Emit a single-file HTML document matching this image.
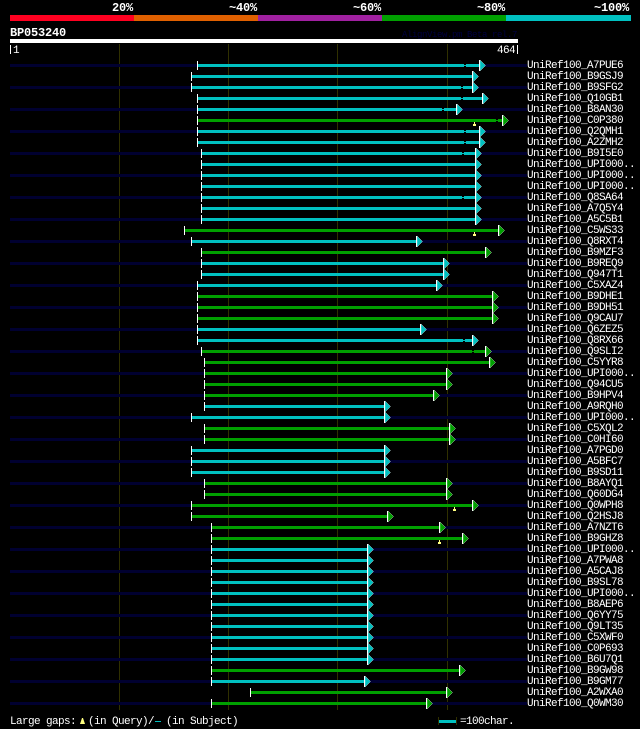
<!DOCTYPE html>
<html><head><meta charset="utf-8"><style>
html,body{margin:0;padding:0;background:#000;width:640px;height:729px;overflow:hidden}
svg{display:block}
text{font-family:"Liberation Mono",monospace;font-size:11px;letter-spacing:-.6px;fill:#fff}
.b{font-weight:bold;font-size:12px;letter-spacing:-.2px}
.n{fill:#000030}.c{fill:#00c0c0}.g{fill:#00a000}
.w{fill:none;stroke:#fff;stroke-width:1px;shape-rendering:crispEdges}
</style></head><body>
<svg width="640" height="729" viewBox="0 0 640 729" xmlns="http://www.w3.org/2000/svg">
<defs>
<g id="ac"><polygon points="1,-5 6.5,.5 1,6" fill="#00c0c0" stroke="#fff" stroke-width=".35"/><rect x="0" y="-5" width="1" height="11" fill="#fff"/></g>
<g id="ag"><polygon points="1,-5 6.5,.5 1,6" fill="#00a000" stroke="#fff" stroke-width=".35"/><rect x="0" y="-5" width="1" height="11" fill="#fff"/></g>
<g id="x"><rect x="0" y="-1" width="2" height="1" fill="#000"/><rect x="0" y="1" width="2" height="1" fill="#000"/></g>
<g id="t" fill="#ffff80"><rect x="1" y="0" width="1" height="2"/><rect x="0" y="2" width="3" height="2"/></g>
<rect id="nv" class="n" x="10" y="-1" width="517" height="3"/>
</defs>
<rect width="640" height="729" fill="#000"/>
<rect x="10" y="15" width="124" height="6" fill="#ff0020"/>
<rect x="134" y="15" width="124" height="6" fill="#e06000"/>
<rect x="258" y="15" width="124" height="6" fill="#a020a0"/>
<rect x="382" y="15" width="124" height="6" fill="#00a000"/>
<rect x="506" y="15" width="125" height="6" fill="#00c0c0"/>
<text class="b" x="112" y="11">20%</text>
<text class="b" x="229" y="11">~40%</text>
<text class="b" x="353" y="11">~60%</text>
<text class="b" x="477" y="11">~80%</text>
<text class="b" x="594" y="11">~100%</text>
<text class="b" x="10" y="36">BP053240</text>
<text x="402" y="37" style="fill:#000040;font-size:9px;letter-spacing:-.4px">AlignView.pm Beta rel.7</text>
<rect x="10" y="39" width="508" height="4" fill="#fff"/>
<rect x="10" y="45" width="1" height="9" fill="#fff"/>
<text x="13" y="53">1</text>
<text x="497" y="53">464</text>
<rect x="517" y="45" width="1" height="9" fill="#fff"/>
<g fill="#303000"><rect x="119" y="44" width="1" height="666"/><rect x="228" y="44" width="1" height="666"/><rect x="337" y="44" width="1" height="666"/><rect x="447" y="44" width="1" height="666"/></g>

<g transform="translate(0,65)"><use href="#nv"/><rect class="c" x="197" y="-1" width="282" height="3"/><use href="#x" x="464"/><use href="#ac" x="479"/><path class="w" d="M197.5-4V5"/><text x="527" y="3">UniRef100_A7PUE6</text></g>
<g transform="translate(0,76)"><rect class="c" x="191" y="-1" width="281" height="3"/><use href="#ac" x="472"/><path class="w" d="M191.5-4V5"/><text x="527" y="3">UniRef100_B9GSJ9</text></g>
<g transform="translate(0,87)"><use href="#nv"/><rect class="c" x="191" y="-1" width="281" height="3"/><use href="#x" x="461"/><use href="#ac" x="472"/><path class="w" d="M191.5-4V5"/><text x="527" y="3">UniRef100_B9SFG2</text></g>
<g transform="translate(0,98)"><rect class="c" x="197" y="-1" width="285" height="3"/><use href="#x" x="461"/><use href="#ac" x="482"/><path class="w" d="M197.5-4V5"/><text x="527" y="3">UniRef100_Q10GB1</text></g>
<g transform="translate(0,109)"><use href="#nv"/><rect class="c" x="197" y="-1" width="259" height="3"/><use href="#x" x="442"/><use href="#ac" x="456"/><path class="w" d="M197.5-4V5"/><text x="527" y="3">UniRef100_B8AN30</text></g>
<g transform="translate(0,120)"><rect class="g" x="197" y="-1" width="305" height="3"/><use href="#x" x="496"/><use href="#ag" x="502"/><path class="w" d="M197.5-4V5"/><use href="#t" x="473" y="2"/><text x="527" y="3">UniRef100_C0P380</text></g>
<g transform="translate(0,131)"><use href="#nv"/><rect class="c" x="197" y="-1" width="282" height="3"/><use href="#x" x="464"/><use href="#ac" x="479"/><path class="w" d="M197.5-4V5"/><text x="527" y="3">UniRef100_Q2QMH1</text></g>
<g transform="translate(0,142)"><rect class="c" x="197" y="-1" width="282" height="3"/><use href="#x" x="464"/><use href="#ac" x="479"/><path class="w" d="M197.5-4V5"/><text x="527" y="3">UniRef100_A2ZMH2</text></g>
<g transform="translate(0,153)"><use href="#nv"/><rect class="c" x="201" y="-1" width="274" height="3"/><use href="#x" x="462"/><use href="#ac" x="475"/><path class="w" d="M201.5-4V5"/><text x="527" y="3">UniRef100_B9I5E0</text></g>
<g transform="translate(0,164)"><rect class="c" x="201" y="-1" width="274" height="3"/><use href="#ac" x="475"/><path class="w" d="M201.5-4V5"/><text x="527" y="3">UniRef100_UPI000..</text></g>
<g transform="translate(0,175)"><use href="#nv"/><rect class="c" x="201" y="-1" width="274" height="3"/><use href="#ac" x="475"/><path class="w" d="M201.5-4V5"/><text x="527" y="3">UniRef100_UPI000..</text></g>
<g transform="translate(0,186)"><rect class="c" x="201" y="-1" width="274" height="3"/><use href="#ac" x="475"/><path class="w" d="M201.5-4V5"/><text x="527" y="3">UniRef100_UPI000..</text></g>
<g transform="translate(0,197)"><use href="#nv"/><rect class="c" x="201" y="-1" width="274" height="3"/><use href="#x" x="462"/><use href="#ac" x="475"/><path class="w" d="M201.5-4V5"/><text x="527" y="3">UniRef100_Q8SA64</text></g>
<g transform="translate(0,208)"><rect class="c" x="201" y="-1" width="274" height="3"/><use href="#ac" x="475"/><path class="w" d="M201.5-4V5"/><text x="527" y="3">UniRef100_A7Q5Y4</text></g>
<g transform="translate(0,219)"><use href="#nv"/><rect class="c" x="201" y="-1" width="274" height="3"/><use href="#ac" x="475"/><path class="w" d="M201.5-4V5"/><text x="527" y="3">UniRef100_A5C5B1</text></g>
<g transform="translate(0,230)"><rect class="g" x="184" y="-1" width="314" height="3"/><use href="#ag" x="498"/><path class="w" d="M184.5-4V5"/><use href="#t" x="473" y="2"/><text x="527" y="3">UniRef100_C5WS33</text></g>
<g transform="translate(0,241)"><use href="#nv"/><rect class="c" x="191" y="-1" width="225" height="3"/><use href="#ac" x="416"/><path class="w" d="M191.5-4V5"/><text x="527" y="3">UniRef100_Q8RXT4</text></g>
<g transform="translate(0,252)"><rect class="g" x="201" y="-1" width="284" height="3"/><use href="#ag" x="485"/><path class="w" d="M201.5-4V5"/><text x="527" y="3">UniRef100_B9MZF3</text></g>
<g transform="translate(0,263)"><use href="#nv"/><rect class="c" x="201" y="-1" width="242" height="3"/><use href="#ac" x="443"/><path class="w" d="M201.5-4V5"/><text x="527" y="3">UniRef100_B9REQ9</text></g>
<g transform="translate(0,274)"><rect class="c" x="201" y="-1" width="242" height="3"/><use href="#ac" x="443"/><path class="w" d="M201.5-4V5"/><text x="527" y="3">UniRef100_Q947T1</text></g>
<g transform="translate(0,285)"><use href="#nv"/><rect class="c" x="197" y="-1" width="239" height="3"/><use href="#ac" x="436"/><path class="w" d="M197.5-4V5"/><text x="527" y="3">UniRef100_C5XAZ4</text></g>
<g transform="translate(0,296)"><rect class="g" x="197" y="-1" width="295" height="3"/><use href="#ag" x="492"/><path class="w" d="M197.5-4V5"/><text x="527" y="3">UniRef100_B9DHE1</text></g>
<g transform="translate(0,307)"><use href="#nv"/><rect class="g" x="197" y="-1" width="295" height="3"/><use href="#ag" x="492"/><path class="w" d="M197.5-4V5"/><text x="527" y="3">UniRef100_B9DH51</text></g>
<g transform="translate(0,318)"><rect class="g" x="197" y="-1" width="295" height="3"/><use href="#ag" x="492"/><path class="w" d="M197.5-4V5"/><text x="527" y="3">UniRef100_Q9CAU7</text></g>
<g transform="translate(0,329)"><use href="#nv"/><rect class="c" x="197" y="-1" width="223" height="3"/><use href="#ac" x="420"/><path class="w" d="M197.5-4V5"/><text x="527" y="3">UniRef100_Q6ZEZ5</text></g>
<g transform="translate(0,340)"><rect class="c" x="197" y="-1" width="275" height="3"/><use href="#x" x="463"/><use href="#ac" x="472"/><path class="w" d="M197.5-4V5"/><text x="527" y="3">UniRef100_Q8RX66</text></g>
<g transform="translate(0,351)"><use href="#nv"/><rect class="g" x="201" y="-1" width="284" height="3"/><use href="#x" x="472"/><use href="#ag" x="485"/><path class="w" d="M201.5-4V5"/><text x="527" y="3">UniRef100_Q9SLI2</text></g>
<g transform="translate(0,362)"><rect class="g" x="204" y="-1" width="285" height="3"/><use href="#ag" x="489"/><path class="w" d="M204.5-4V5"/><text x="527" y="3">UniRef100_C5YYR8</text></g>
<g transform="translate(0,373)"><use href="#nv"/><rect class="g" x="204" y="-1" width="242" height="3"/><use href="#ag" x="446"/><path class="w" d="M204.5-4V5"/><text x="527" y="3">UniRef100_UPI000..</text></g>
<g transform="translate(0,384)"><rect class="g" x="204" y="-1" width="242" height="3"/><use href="#ag" x="446"/><path class="w" d="M204.5-4V5"/><text x="527" y="3">UniRef100_Q94CU5</text></g>
<g transform="translate(0,395)"><use href="#nv"/><rect class="g" x="204" y="-1" width="229" height="3"/><use href="#ag" x="433"/><path class="w" d="M204.5-4V5"/><text x="527" y="3">UniRef100_B9HPV4</text></g>
<g transform="translate(0,406)"><rect class="c" x="204" y="-1" width="180" height="3"/><use href="#ac" x="384"/><path class="w" d="M204.5-4V5"/><text x="527" y="3">UniRef100_A9RQH0</text></g>
<g transform="translate(0,417)"><use href="#nv"/><rect class="c" x="191" y="-1" width="193" height="3"/><use href="#ac" x="384"/><path class="w" d="M191.5-4V5"/><text x="527" y="3">UniRef100_UPI000..</text></g>
<g transform="translate(0,428)"><rect class="g" x="204" y="-1" width="245" height="3"/><use href="#ag" x="449"/><path class="w" d="M204.5-4V5"/><text x="527" y="3">UniRef100_C5XQL2</text></g>
<g transform="translate(0,439)"><use href="#nv"/><rect class="g" x="204" y="-1" width="245" height="3"/><use href="#ag" x="449"/><path class="w" d="M204.5-4V5"/><text x="527" y="3">UniRef100_C0HI60</text></g>
<g transform="translate(0,450)"><rect class="c" x="191" y="-1" width="193" height="3"/><use href="#ac" x="384"/><path class="w" d="M191.5-4V5"/><text x="527" y="3">UniRef100_A7PGD0</text></g>
<g transform="translate(0,461)"><use href="#nv"/><rect class="c" x="191" y="-1" width="193" height="3"/><use href="#ac" x="384"/><path class="w" d="M191.5-4V5"/><text x="527" y="3">UniRef100_A5BFC7</text></g>
<g transform="translate(0,472)"><rect class="c" x="191" y="-1" width="193" height="3"/><use href="#ac" x="384"/><path class="w" d="M191.5-4V5"/><text x="527" y="3">UniRef100_B9SD11</text></g>
<g transform="translate(0,483)"><use href="#nv"/><rect class="g" x="204" y="-1" width="242" height="3"/><use href="#ag" x="446"/><path class="w" d="M204.5-4V5"/><text x="527" y="3">UniRef100_B8AYQ1</text></g>
<g transform="translate(0,494)"><rect class="g" x="204" y="-1" width="242" height="3"/><use href="#ag" x="446"/><path class="w" d="M204.5-4V5"/><text x="527" y="3">UniRef100_Q60DG4</text></g>
<g transform="translate(0,505)"><use href="#nv"/><rect class="g" x="191" y="-1" width="281" height="3"/><use href="#ag" x="472"/><path class="w" d="M191.5-4V5"/><use href="#t" x="453" y="2"/><text x="527" y="3">UniRef100_Q0WPH8</text></g>
<g transform="translate(0,516)"><rect class="g" x="191" y="-1" width="196" height="3"/><use href="#ag" x="387"/><path class="w" d="M191.5-4V5"/><text x="527" y="3">UniRef100_Q2HSJ8</text></g>
<g transform="translate(0,527)"><use href="#nv"/><rect class="g" x="211" y="-1" width="228" height="3"/><use href="#ag" x="439"/><path class="w" d="M211.5-4V5"/><text x="527" y="3">UniRef100_A7NZT6</text></g>
<g transform="translate(0,538)"><rect class="g" x="211" y="-1" width="251" height="3"/><use href="#ag" x="462"/><path class="w" d="M211.5-4V5"/><use href="#t" x="438" y="2"/><text x="527" y="3">UniRef100_B9GHZ8</text></g>
<g transform="translate(0,549)"><use href="#nv"/><rect class="c" x="211" y="-1" width="156" height="3"/><use href="#ac" x="367"/><path class="w" d="M211.5-4V5"/><text x="527" y="3">UniRef100_UPI000..</text></g>
<g transform="translate(0,560)"><rect class="c" x="211" y="-1" width="156" height="3"/><use href="#ac" x="367"/><path class="w" d="M211.5-4V5"/><text x="527" y="3">UniRef100_A7PWA8</text></g>
<g transform="translate(0,571)"><use href="#nv"/><rect class="c" x="211" y="-1" width="156" height="3"/><use href="#ac" x="367"/><path class="w" d="M211.5-4V5"/><text x="527" y="3">UniRef100_A5CAJ8</text></g>
<g transform="translate(0,582)"><rect class="c" x="211" y="-1" width="156" height="3"/><use href="#ac" x="367"/><path class="w" d="M211.5-4V5"/><text x="527" y="3">UniRef100_B9SL78</text></g>
<g transform="translate(0,593)"><use href="#nv"/><rect class="c" x="211" y="-1" width="156" height="3"/><use href="#ac" x="367"/><path class="w" d="M211.5-4V5"/><text x="527" y="3">UniRef100_UPI000..</text></g>
<g transform="translate(0,604)"><rect class="c" x="211" y="-1" width="156" height="3"/><use href="#ac" x="367"/><path class="w" d="M211.5-4V5"/><text x="527" y="3">UniRef100_B8AEP6</text></g>
<g transform="translate(0,615)"><use href="#nv"/><rect class="c" x="211" y="-1" width="156" height="3"/><use href="#ac" x="367"/><path class="w" d="M211.5-4V5"/><text x="527" y="3">UniRef100_Q6YY75</text></g>
<g transform="translate(0,626)"><rect class="c" x="211" y="-1" width="156" height="3"/><use href="#ac" x="367"/><path class="w" d="M211.5-4V5"/><text x="527" y="3">UniRef100_Q9LT35</text></g>
<g transform="translate(0,637)"><use href="#nv"/><rect class="c" x="211" y="-1" width="156" height="3"/><use href="#ac" x="367"/><path class="w" d="M211.5-4V5"/><text x="527" y="3">UniRef100_C5XWF0</text></g>
<g transform="translate(0,648)"><rect class="c" x="211" y="-1" width="156" height="3"/><use href="#ac" x="367"/><path class="w" d="M211.5-4V5"/><text x="527" y="3">UniRef100_C0P693</text></g>
<g transform="translate(0,659)"><use href="#nv"/><rect class="c" x="211" y="-1" width="156" height="3"/><use href="#ac" x="367"/><path class="w" d="M211.5-4V5"/><text x="527" y="3">UniRef100_B6U7Q1</text></g>
<g transform="translate(0,670)"><rect class="g" x="211" y="-1" width="248" height="3"/><use href="#ag" x="459"/><path class="w" d="M211.5-4V5"/><text x="527" y="3">UniRef100_B9GW98</text></g>
<g transform="translate(0,681)"><use href="#nv"/><rect class="c" x="211" y="-1" width="153" height="3"/><use href="#ac" x="364"/><path class="w" d="M211.5-4V5"/><text x="527" y="3">UniRef100_B9GM77</text></g>
<g transform="translate(0,692)"><rect class="g" x="250" y="-1" width="196" height="3"/><use href="#ag" x="446"/><path class="w" d="M250.5-4V5"/><text x="527" y="3">UniRef100_A2WXA0</text></g>
<g transform="translate(0,703)"><use href="#nv"/><rect class="g" x="211" y="-1" width="215" height="3"/><use href="#ag" x="426"/><path class="w" d="M211.5-4V5"/><text x="527" y="3">UniRef100_Q0WM30</text></g>

<text x="10" y="724">Large gaps:</text>
<polygon points="82,718 83,718 85,724 80,724" fill="#ffff80"/>
<text x="88" y="724">(in Query)/</text>
<rect x="155" y="721" width="6" height="1" fill="#00c0c0"/>
<text x="166" y="724">(in Subject)</text>
<rect x="438" y="717" width="1" height="8" fill="#303000"/>
<rect x="456" y="717" width="1" height="8" fill="#303000"/>
<rect x="439" y="720" width="17" height="3" fill="#00c0c0"/>
<text x="460" y="724">=100char.</text>
</svg>
</body></html>
